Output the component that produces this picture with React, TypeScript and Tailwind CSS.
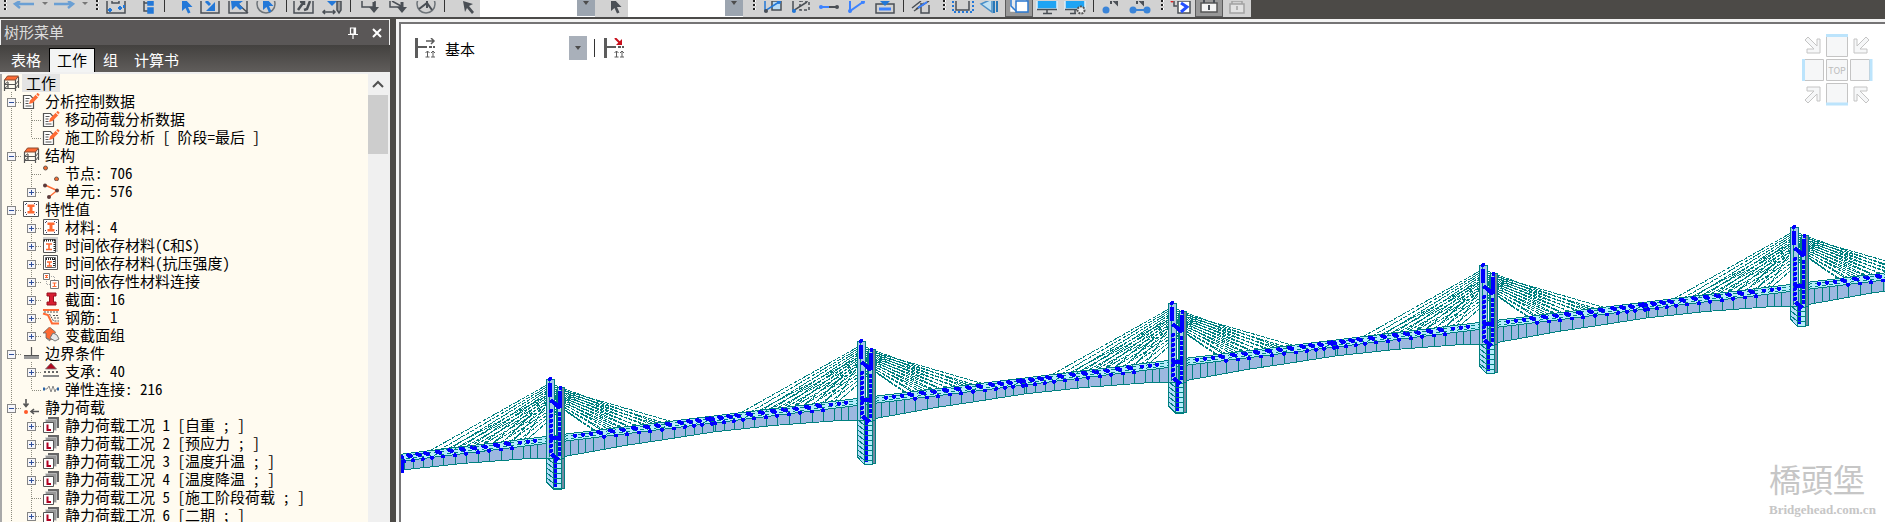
import { useState } from 'react'
import type { ReactNode } from 'react'
import { clsx } from 'clsx'

type IconName =
  | 'frame' | 'note' | 'nodes' | 'elements' | 'property' | 'creep' | 'strength' | 'link'
  | 'section' | 'rebar' | 'tapered' | 'boundary' | 'support' | 'spring' | 'load' | 'case'

interface TreeRow {
  level: 1 | 2
  icon: IconName
  label: string
  box?: 'plus' | 'minus'
  last?: boolean
}

const rows: TreeRow[] = [
  { level: 1, icon: 'note', label: '分析控制数据', box: 'minus' },
  { level: 2, icon: 'note', label: '移动荷载分析数据' },
  { level: 2, icon: 'note', label: '施工阶段分析 [ 阶段=最后 ]', last: true },
  { level: 1, icon: 'frame', label: '结构', box: 'minus' },
  { level: 2, icon: 'nodes', label: '节点: 706' },
  { level: 2, icon: 'elements', label: '单元: 576', box: 'plus', last: true },
  { level: 1, icon: 'property', label: '特性值', box: 'minus' },
  { level: 2, icon: 'property', label: '材料: 4', box: 'plus' },
  { level: 2, icon: 'creep', label: '时间依存材料(C和S)', box: 'plus' },
  { level: 2, icon: 'strength', label: '时间依存材料(抗压强度)', box: 'plus' },
  { level: 2, icon: 'link', label: '时间依存性材料连接', box: 'plus' },
  { level: 2, icon: 'section', label: '截面: 16', box: 'plus' },
  { level: 2, icon: 'rebar', label: '钢筋: 1', box: 'plus' },
  { level: 2, icon: 'tapered', label: '变截面组', box: 'plus', last: true },
  { level: 1, icon: 'boundary', label: '边界条件', box: 'minus' },
  { level: 2, icon: 'support', label: '支承: 40', box: 'plus' },
  { level: 2, icon: 'spring', label: '弹性连接: 216', last: true },
  { level: 1, icon: 'load', label: '静力荷载', box: 'minus' },
  { level: 2, icon: 'case', label: '静力荷载工况 1 [自重 ; ]', box: 'plus' },
  { level: 2, icon: 'case', label: '静力荷载工况 2 [预应力 ; ]', box: 'plus' },
  { level: 2, icon: 'case', label: '静力荷载工况 3 [温度升温 ; ]', box: 'plus' },
  { level: 2, icon: 'case', label: '静力荷载工况 4 [温度降温 ; ]', box: 'plus' },
  { level: 2, icon: 'case', label: '静力荷载工况 5 [施工阶段荷载 ; ]' },
  { level: 2, icon: 'case', label: '静力荷载工况 6 [二期 ; ]', box: 'plus' },
]

const tabs = ['表格', '工作', '组', '计算书']

const beamI = 'M5 4h7v2.500h-2v4h2V13H5v-2.500h2v-4H5z'

const treeIcons: Record<IconName, ReactNode> = {
  frame: (
    <>
      <path d="M4.500 1h11l-3 4h-11z" fill="#ff6a33" stroke="#8a4a30" />
      <path d="M1.500 5v11M12.500 5v11M15.500 2v11M5 7v6" fill="none" stroke="#555" strokeWidth="1.200" />
      <path d="M1.500 9.500h11l3-4M1.500 13.500h11l3-4M1.500 9.500L5 6.500M1.500 13.500l3.500-3" fill="none" stroke="#555" />
    </>
  ),
  note: (
    <>
      <path d="M.5 2.500h7l3 3.500v9.500H.5z" fill="#fff" stroke="#555" strokeWidth="1.200" />
      <path d="M2.500 5.500h4M2.500 8h3M2.500 10.500h3M2.500 13h6" stroke="#555" />
      <path d="M6 11l1-3.500L13 1.500l2.500 2.500-6 6z" fill="#ff6a33" />
      <path d="M14 .5l2 2" stroke="#ff6a33" strokeWidth="2" />
      <path d="M12.500 1.500l3 3" stroke="#fff" strokeWidth=".7" />
    </>
  ),
  nodes: (
    <>
      <circle cx="2.500" cy="3" r="2" fill="#f26a2e" stroke="#6b5a50" />
      <circle cx="13.500" cy="14" r="2" fill="#f26a2e" stroke="#6b5a50" />
    </>
  ),
  elements: (
    <>
      <path d="M2 2l12 5.500L6 14" fill="none" stroke="#ff6a33" strokeWidth="1.4" />
      <circle cx="2" cy="2.500" r="2" fill="#5b3a3a" />
      <circle cx="14" cy="7.500" r="2" fill="#5b3a3a" />
      <circle cx="6" cy="14" r="2" fill="#5b3a3a" />
    </>
  ),
  property: (
    <>
      <path d="M.5 .5h15v15H.5z" fill="#fff" stroke="#555" />
      <path d="M2.500 3v2M2.500 11v2M13.500 3v2M13.500 11v2M3 2.500h2M11 2.500h2M3 13.500h2M11 13.500h2" stroke="#446" strokeDasharray="1 1" />
      <path d={beamI} transform="translate(-.5 -.5)" fill="#ff6a33" />
    </>
  ),
  creep: (
    <>
      <path d="M0 0h15v15H0z" fill="#cfcfcf" />
      <path d="M.5 2.500h12v13H.5z" fill="#fff" stroke="#555" />
      <path d="M1 3.500h12M11.500 3v12" stroke="#222" strokeWidth="2" strokeDasharray="1 1" />
      <path d="M3 7h6M3 12.500h6M6 7v5" stroke="#ff6a33" strokeWidth="1.6" />
    </>
  ),
  strength: (
    <>
      <path d="M.5 .5h14v14H.5z" fill="#fff" stroke="#555" />
      <path d="M2.500 2.500h10v10h-10z" fill="#fff" stroke="#666" />
      <path d="M3 4h9M11 4v8" stroke="#222" strokeWidth="2" strokeDasharray="1 1" />
      <path d="M4 7h5M4 11h5M6.500 7v4" stroke="#ff6a33" strokeWidth="1.4" />
    </>
  ),
  link: (
    <>
      <path d="M.5 .5h6v6h-6zM7.500 7.500h8v8h-8z" fill="#fff" stroke="#777" />
      <path d="M2 2.500h3M2 4.500h3M3.500 2v3M9.500 10h4M9.500 13.500h4M11.500 10v4" stroke="#ff6a33" strokeWidth="1.2" />
      <path d="M3.500 8v3.500H7M8 3.500h3.500V7" fill="none" stroke="#aaa" strokeDasharray="1 1" />
    </>
  ),
  section: <path d="M4 2h9v3h-2.500v6H13v3H4v-3h2.500V5H4z" fill="#d81e30" stroke="#98101e" />,
  rebar: (
    <>
      <path d="M0 1h16M0 4.500l5 1.500 4 8.500h7" fill="none" stroke="#ff6a33" strokeWidth="2" />
      <path d="M1 3h15M6.500 5l4 7H16M10 6.500h6M11 9h5" fill="none" stroke="#555" strokeDasharray="2 1" />
    </>
  ),
  tapered: (
    <>
      <path d="M6.500 0l6 5-1.500 3-3 5-5-2V6H0z" fill="#ff6a33" stroke="#666" strokeWidth=".8" />
      <path d="M10 6l4 2 2 4-4 2-5-3z" fill="#e8e8e8" stroke="#777" />
      <path d="M3 11l4 3" stroke="#777" />
    </>
  ),
  boundary: (
    <>
      <path d="M1 11h15v3H1z" fill="#999" />
      <path d="M1 10.500h15M8.500 2v8" stroke="#555" strokeWidth="1.2" />
    </>
  ),
  support: (
    <>
      <path d="M8 0l5.500 6h-11z" fill="#b0081e" stroke="#777" strokeWidth=".8" />
      <path d="M1 9h14" stroke="#666" strokeWidth="2" strokeDasharray="2 2" />
      <path d="M0 13h16" stroke="#888" strokeWidth="2" />
    </>
  ),
  spring: (
    <>
      <path d="M2 8h2l2-3 2 6 2-6 2 6 1-3h3" fill="none" stroke="#888" />
      <path d="M0 6.500h2v3H0zM14 6.500h2v3h-2z" fill="#2a64a8" />
    </>
  ),
  load: (
    <>
      <path d="M3 0v7M.5 4.500L3 7.500l2.500-3M16 12.500H9M11 10l-3 2.500 3 2.500" fill="none" stroke="#555" strokeWidth="1.6" />
      <circle cx="3" cy="13" r="2" fill="#ff5a2a" />
    </>
  ),
  case: (
    <>
      <path d="M5 0h11v11H5z" fill="#666" />
      <path d="M2.500 2.500h11v11h-11z" fill="#999" stroke="#ddd" strokeWidth=".6" />
      <path d="M.5 5.500h10v10H.5z" fill="#fff" stroke="#555" />
      <path d="M4.500 7.500V13H8" fill="none" stroke="#b00020" strokeWidth="2" />
    </>
  ),
}

function TreeIcon({ name }: { name: IconName }) {
  return (
    <svg className="w-[18px] h-4 shrink-0" viewBox="-1 0 18 16">
      {treeIcons[name]}
    </svg>
  )
}

interface GuideProps {
  line: 'full' | 'half'
  branch?: boolean
  box?: 'plus' | 'minus'
}

function Guide({ line, branch, box }: GuideProps) {
  const drawing = (
    <svg className="block w-5 h-[18px]" viewBox="0 0 20 18" shapeRendering="crispEdges">
      <path
        d={`M9.500 0V${line === 'full' ? 18 : 10}${branch ? 'M9.500 10.500H20' : ''}`}
        stroke="#8c8c80"
        strokeDasharray="1 1"
      />
      {box && (
        <>
          <rect x="5.500" y="6.500" width="8" height="8" fill="#f6f6fa" stroke="#858585" />
          <path d={box === 'plus' ? 'M7 10.500h5M9.500 8v5' : 'M7 10.500h5'} stroke="#30509c" />
        </>
      )}
    </svg>
  )
  if (!box) return drawing
  return (
    <button className="shrink-0" aria-label={box === 'plus' ? '展开' : '折叠'}>
      {drawing}
    </button>
  )
}

function TreeItem({ row }: { row: TreeRow }) {
  return (
    <li className="flex items-center h-[18px] whitespace-pre">
      {row.level === 1 ? (
        <Guide line="full" branch box={row.box} />
      ) : (
        <>
          <Guide line="full" />
          <Guide line={row.last ? 'half' : 'full'} branch box={row.box} />
        </>
      )}
      <TreeIcon name={row.icon} />
      <span className="ml-[5px]">{row.label}</span>
    </li>
  )
}

function SidePanel() {
  const [active, setActive] = useState('工作')

  return (
    <aside className="w-[390px] shrink-0 flex flex-col min-h-0">
      {/* Title bar */}
      <div className="h-[26px] shrink-0 flex items-center border border-b-0 border-[#f0f0f0] bg-[#5a5757] pl-[3px] pr-1.5 text-[#dcdcdc]">
        <h2 className="flex-1 text-[15px]">树形菜单</h2>
        <button className="mr-3" aria-label="固定">
          <svg className="w-3 h-3" viewBox="0 0 12 12" fill="none" stroke="#fff">
            <path d="M3.500 1h5v6h-5zM1 7.500h10M6 8v4" strokeWidth="1.2" />
            <path d="M7.500 1v6" strokeWidth="2" />
          </svg>
        </button>
        <button aria-label="关闭">
          <svg className="w-3 h-3" viewBox="0 0 12 12" stroke="#fff" strokeWidth="2">
            <path d="M2 2l8 8M10 2l-8 8" />
          </svg>
        </button>
      </div>

      {/* Tabs */}
      <div className="h-[27px] shrink-0 flex items-end bg-linear-to-b from-[#43413f] to-[#605d5b] pl-[3px] text-[15px]">
        {tabs.map(tab => (
          <button
            key={tab}
            onClick={() => setActive(tab)}
            className={clsx(
              'h-6 px-[7px] border border-b-0',
              tab === active
                ? 'bg-[#f3f4f4] border-black text-black'
                : 'border-transparent text-white'
            )}
          >
            {tab}
          </button>
        ))}
      </div>

      {/* Tree */}
      <div className="flex-1 min-h-0 flex border-t-2 border-r-2 border-[#f0f0f0] bg-[#fffbf0]">
        <div className="flex-1 min-w-0 border-l-2 border-[#a8a8a8] text-[15px] leading-[18px] font-light text-black font-['Noto_Sans_Mono_CJK_SC','Noto_Sans_CJK_SC',monospace]">
          <div className="flex items-center h-[18px]">
            <TreeIcon name="frame" />
            <span className="ml-0.5 px-1 bg-[#e4e4e4]">工作</span>
          </div>
          <ul>
            {rows.map(row => (
              <TreeItem key={row.label} row={row} />
            ))}
          </ul>
        </div>
        <div className="w-5 shrink-0 bg-[#f0f0f0] flex flex-col">
          <svg className="w-5 h-[21px]" viewBox="0 0 20 21" fill="none" stroke="#505050" strokeWidth="2">
            <path d="M5 13l5-5 5 5" />
          </svg>
          <div className="h-[59px] bg-[#cdcdcd]" />
        </div>
      </div>
    </aside>
  )
}

const dark = '#4a4f55'
const blue = '#2378d8'

function Tool({ label, pressed, children }: { label: string; pressed?: boolean; children: ReactNode }) {
  return (
    <button
      aria-label={label}
      className={clsx('w-7 h-[17px] shrink-0', pressed && 'bg-[#989898] border border-t-0 border-[#5c5c5c]')}
    >
      <svg className={clsx('block h-4', pressed ? '-ml-px w-7' : 'w-7')} viewBox="0 0 28 16" fill="none" stroke={dark} strokeWidth="1.500">
        {children}
      </svg>
    </button>
  )
}

function Caret() {
  return (
    <svg className="w-3 h-4 shrink-0" viewBox="0 0 12 16">
      <path d="M4 2h6L7 5z" fill="#777" />
    </svg>
  )
}

function Grip({ className }: { className?: string }) {
  return (
    <svg className={clsx('w-2.5 h-[17px] shrink-0', className)} viewBox="0 0 10 17" shapeRendering="crispEdges">
      <path d="M6 0v11" stroke="#fff" strokeWidth="2" strokeDasharray="2 2" />
      <path d="M5 0v11" stroke="#222" strokeWidth="2" strokeDasharray="2 2" />
    </svg>
  )
}

function Separator({ className }: { className?: string }) {
  return (
    <div className={clsx('flex justify-center shrink-0 h-[17px]', className)}>
      <div className="w-px h-3 bg-[#333]" />
    </div>
  )
}

function ToolSelect({ label, className }: { label: string; className?: string }) {
  return (
    <div className={clsx('relative w-[115px] h-[17px] shrink-0', className)}>
      <select aria-label={label} className="w-full h-full appearance-none bg-white" />
      <svg className="absolute right-0 top-0 w-[18px] h-4 bg-[#9ca5b0] pointer-events-none" viewBox="0 0 18 16">
        <path d="M6 1h6L9 5z" fill="#4c4c4c" />
      </svg>
    </div>
  )
}

const pointer = 'M0 -5v15l3.500-3 2.500 5.500 2.500-1-2.500-5.500h4.500z'

function Toolbar() {
  return (
    <div className="flex w-[1251px] h-[18px] overflow-hidden bg-[#d2d2d2] border-b border-[#4b4b4b]">
      <Grip />
      <Tool label="撤销"><path d="M5 3h19M10 0L5 3l5 4" stroke="#6a9fd4" strokeWidth="2.500" /></Tool>
      <Caret />
      <Tool label="重做"><path d="M4 3h19M18 0l5 3-5 4" stroke="#6a9fd4" strokeWidth="2.500" /></Tool>
      <Caret />
      <Grip className="ml-0.5" />
      <Tool label="节点框选">
        <path d="M5 0v12h18V0M10 0v2h7V0" />
        <path d="M8 7v4M6 9h4M18 5v4M16 7h4M22 4v3" stroke={blue} strokeWidth="2" />
      </Tool>
      <Tool label="单元树">
        <path d="M14 0v10h4M14 2h4" />
        <path d="M18 0h5v4h-5zM18 7h5v5h-5z" fill={blue} stroke={blue} />
      </Tool>
      <Separator className="w-3" />
      <Tool label="选择"><path d={pointer} transform="translate(12 0)" fill={blue} stroke="none" /></Tool>
      <Tool label="窗口选择">
        <path d="M3 0v12h18V0" />
        <path d="M8 0l4 4" stroke={blue} strokeWidth="3" />
        <path d="M17 1v9H8z" fill={blue} stroke="none" />
      </Tool>
      <Tool label="窗口解除">
        <path d="M3 0v12h18V0M12 3l10 9" />
        <path d="M5 0h12l-4 3 4 4-3 2-4-4-4 4z" fill={blue} stroke="none" />
      </Tool>
      <Tool label="圆形选择">
        <circle cx="12" cy="3" r="9" stroke="#6d7378" />
        <path d={pointer} transform="translate(9 -1)" fill={blue} stroke="none" />
      </Tool>
      <Separator className="w-2" />
      <Tool label="多边形选择">
        <path d="M4 0v12h19V0" />
        <path d="M8 9l5-7M10 1l4-1v4M20 0l-3 8-3 1" strokeWidth="2.500" />
      </Tool>
      <Tool label="平面选择">
        <path d="M9 0l5 5 5-5z" fill={blue} stroke="none" />
        <path d="M5 11h12M7 9l-2 2 2 2M15 9l2 2-2 2" />
        <path d="M19 0h4v9l-2 3-2-3z" fill="#999" />
      </Tool>
      <Separator className="w-2" />
      <Tool label="激活">
        <path d="M8 0v6h13V0" />
        <path d="M20 1v6" strokeWidth="3" />
        <path d="M15 6h10l-5 6z" fill={dark} stroke="none" />
      </Tool>
      <Tool label="钝化">
        <path d="M8 0v6h13M10 0l9 5" />
        <path d="M20 1v6" strokeWidth="3" />
        <path d="M15 6h10l-5 6z" fill={dark} stroke="none" />
      </Tool>
      <Tool label="全部激活">
        <circle cx="16" cy="3" r="9" stroke="#6d7378" />
        <path d="M9 8l8-6 5 7M17 0v7" strokeWidth="2" />
      </Tool>
      <Separator className="w-3" />
      <Tool label="按名称选择">
        <path d="M13 0l10 3-4 2 5 6-2 2-5-6-2 4z" fill={dark} stroke="none" />
      </Tool>
      <ToolSelect label="选择节点" className="ml-0.5" />
      <Tool label="选择单元">
        <path d={pointer} transform="translate(16 0)" fill={dark} stroke="none" />
      </Tool>
      <ToolSelect label="选择命名" className="ml-[5px]" />
      <Grip className="ml-1.5" />
      <Tool label="缩放窗口">
        <path d="M13 0h9v9h-9z" fill="#b9dcf6" />
        <path d="M6 0v10l14-9" stroke={blue} />
        <circle cx="7" cy="10" r="2" fill={dark} stroke="none" />
        <circle cx="20" cy="1" r="2" fill={blue} stroke="none" />
      </Tool>
      <Tool label="全部缩放">
        <path d="M13 0h9v9h-9z" strokeDasharray="3 2" />
        <path d="M6 0v10l14-9" />
        <circle cx="7" cy="10" r="2" fill={blue} stroke="none" />
      </Tool>
      <Tool label="测量">
        <path d="M6 6h16" strokeWidth="2" />
        <path d="M6 6h8" stroke="#3c82ff" strokeWidth="2" />
        <circle cx="6" cy="6" r="2" fill="#3c82ff" stroke="none" />
        <circle cx="22" cy="6" r="2" fill={dark} stroke="none" />
      </Tool>
      <Tool label="折线">
        <path d="M7 0v10L20 1" stroke="#3c82ff" strokeWidth="2" />
        <circle cx="7" cy="10" r="2" fill="#3c82ff" stroke="none" />
        <circle cx="20" cy="1" r="2" fill="#3c82ff" stroke="none" />
      </Tool>
      <Tool label="载入">
        <path d="M5 3v9h18V3z" />
        <path d="M8 8h12" stroke="#3c82ff" strokeWidth="3" />
        <path d="M9 0h10l-5 5z" fill={blue} stroke="none" />
      </Tool>
      <Separator className="w-2" />
      <Tool label="编辑">
        <path d="M5 7l9-7M7 10L22 0M14 2v10h8V4M9 8l8-6" />
        <path d="M11 7l9-6" stroke="#3c82ff" strokeWidth="2" />
      </Tool>
      <Grip className="ml-1" />
      <Tool label="虚线框">
        <path d="M7 0v9h13V0" />
        <path d="M4 0v11h20V0" stroke={blue} strokeWidth="2" strokeDasharray="2 2" />
      </Tool>
      <Tool label="透视">
        <path d="M4 3L15 -2v13z" fill="#bfe0f2" stroke="#4a90c8" />
        <path d="M17 0v12M20 0v11" stroke="#2878b8" strokeWidth="2" />
      </Tool>
      <Tool label="消隐" pressed>
        <path d="M6 -3h14v14H6z" fill="#e8eaec" stroke="#fff" />
        <path d="M11 1h12v11H11z" fill="#fff" stroke="#2a78d0" />
        <path d="M6 0v6l5 5" stroke="#2a78d0" />
      </Tool>
      <Tool label="显示">
        <path d="M4 -4h20v12H4z" fill="#1fa4f4" stroke="#ddeefa" />
        <path d="M4 8.500h20M14 9v3M10 12.500h9" />
      </Tool>
      <Tool label="显示选项">
        <path d="M4 -4h20v12H4z" fill="#1fa4f4" stroke="#ddeefa" />
        <path d="M4 8.500h12M14 9v3M9 12.500h6" />
        <circle cx="20" cy="9" r="3.500" stroke="#555" strokeWidth="2" strokeDasharray="2 1" fill="#eee" />
      </Tool>
      <Separator className="w-2" />
      <Tool label="节点号">
        <circle cx="9" cy="9" r="3.500" fill="#3a84d8" stroke="none" />
        <path d="M14 3v-6l6 6v-6" strokeWidth="2" />
      </Tool>
      <Tool label="单元号">
        <path d="M8 9h14" stroke="#3a84d8" strokeWidth="2" />
        <circle cx="8" cy="9" r="3.500" fill="#3a84d8" stroke="none" />
        <circle cx="22" cy="9" r="3.500" fill="#3a84d8" stroke="none" />
        <path d="M12 3v-6l6 6v-6" strokeWidth="2" />
      </Tool>
      <Grip className="ml-1" />
      <Tool label="阶段">
        <path d="M7 0v5h3" />
        <path d="M11 0h12v12H11z" fill="#fff" />
        <path d="M14 2l6 4-6 5" stroke="#2450ff" strokeWidth="3" />
        <circle cx="5" cy="0" r="1.500" fill="#d22" stroke="none" />
      </Tool>
      <Tool label="锁定" pressed>
        <path d="M6 3h16v9H6z" fill="#f4f4f4" stroke="#555" />
        <path d="M9 3V0M19 3V0M14 5v5" strokeWidth="2" />
      </Tool>
      <Tool label="解锁">
        <path d="M7 3h14v9H7z" fill="#e2e2e2" stroke="#a2a2a2" />
        <path d="M9 3V0h10v3M14 5v4" stroke="#a2a2a2" />
      </Tool>
    </div>
  )
}

// Bridge model. Each span is drawn in coordinates relative to the head of its tower.
const SPAN = 311
const RISE = 38
const towers = [
  { n: -1, foot: 110 },
  { n: 0, foot: 110 },
  { n: 1, foot: 123 },
  { n: 2, foot: 110 },
  { n: 3, foot: 108 },
  { n: 4, foot: 99 },
]

const topY = (x: number) => 57 - (x * RISE) / SPAN
const slabY = (x: number) => 64 - (x * RISE) / SPAN

const soffit: [number, number][] = [
  [0, 79], [14, 77.5], [45, 72], [78, 66], [112, 61], [163, 53], [223, 46.5], [283, 42], [311, 41],
]

const soffitY = (x: number) => {
  const i = Math.max(1, soffit.findIndex(p => p[0] >= x))
  const [x0, y0] = soffit[i - 1]
  const [x1, y1] = soffit[i]
  return y0 + ((x - x0) / (x1 - x0)) * (y1 - y0)
}

const ribs = [20, 28, 35, 43, 54, 66, 77, 89, 100, 112, 124, 135, 144, 152, 163, 165, 174, 184, 193, 204, 216, 227, 239, 250, 262, 273, 284, 291, 298]
const rearDots = [25, 33, 41, 49, 61, 72, 84, 96, 107, 118, 130, 139, 148, 158, 161, 170, 179, 187, 199, 211, 223, 234, 245, 257, 268, 281, 289, 296]
const frontDots = [54, 66, 77, 89, 100, 112, 124, 135, 144, 152, 162, 165, 174, 184, 193, 204, 216, 227, 239, 250, 262, 273]
const pairs = (x: number) => (x >= 49 && x <= 268)

const cables = Array.from({ length: 10 }, (_, i) => i)
const studs = Array.from({ length: 9 }, (_, i) => 32 + i * 5)

function Deck() {
  const edge = soffit.map(([x, y]) => `${x},${y}`).join(' ')
  return (
    <g>
      <polygon points={`0,${slabY(0)} ${SPAN},${slabY(SPAN)} ${edge.split(' ').reverse().join(' ')}`} fill="#9cb8e0" />
      <polygon points={`0,${topY(0)} ${SPAN},${topY(SPAN)} ${SPAN},${slabY(SPAN)} 0,${slabY(0)}`} fill="#b4ecfa" />
      <polyline points={edge} fill="none" stroke="#008080" />
      <path
        d={`M0 ${topY(0)}L${SPAN} ${topY(SPAN)}M0 ${slabY(0)}L${SPAN} ${slabY(SPAN)}` +
          ribs.map(x => `M${x} ${slabY(x)}V${soffitY(x)}`).join('')}
        stroke="#008080"
        fill="none"
      />
      <path
        d={`M0 ${topY(0) + 2}L${SPAN} ${topY(SPAN) + 2}M0 ${topY(0) + 5}L${SPAN} ${topY(SPAN) + 5}`}
        stroke="#008080"
        strokeDasharray="4 3"
      />
      {rearDots.map(x => (
        <path
          key={x}
          d={pairs(x) ? `M${x - 1} ${topY(x) + 2}l3 1` : `M${x} ${topY(x) + 3}h.1`}
          stroke="#0000ff"
          strokeWidth="4"
          strokeLinecap="round"
        />
      ))}
      {frontDots.map(x => (
        <circle key={x} cx={x} cy={slabY(x) + 0.5} r="2" fill="#0000ff" />
      ))}
    </g>
  )
}

function Cables() {
  const d = cables
    .map(i => {
      const rearL = -120 + i * 10.5
      const frontL = -104 + i * 9
      const rearR = 107 - i * 7
      const frontR = 123 - i * 8.5
      return (
        `M-3 ${6 + i * 2}L${rearL} ${topY(rearL)}` +
        `M8 ${11 + i * 2.5}L${frontL} ${topY(frontL) + 1}` +
        `M4 ${6 + i * 2}L${rearR} ${topY(rearR)}` +
        `M12 ${11 + i * 2}L${frontR} ${topY(frontR) + 1}`
      )
    })
    .join('')
  return <path d={d} stroke="#008080" strokeDasharray="4 1" fill="none" />
}

function Tower({ foot }: { foot: number }) {
  const rungs = []
  for (let y = 84; y < foot; y += 5) rungs.push(y)
  return (
    <g>
      {/* Leg below the deck */}
      <path d={`M-3.500 79V${foot - 7}L3 ${foot}V79z`} fill="#b4dcfa" stroke="#008080" />
      <path d={`M3 79h8V${foot}H3z`} fill="#b4ecfa" stroke="#008080" />
      <path d={`M11 79h3V${foot - 1}h-3z`} fill="#7488a0" stroke="#008080" />
      <path d={rungs.map(y => `M-3 ${y - 5}l6 5h8`).join('')} stroke="#008080" fill="none" />

      {/* Columns */}
      <path d="M-3.500 0h7.500v79h-7.500z" fill="#a4c8ec" stroke="#008080" />
      <path d="M-.5 2v76M6 12v68" stroke="#008080" />
      <path d="M7.500 8h4v72h-4z" fill="#a4d0f0" stroke="#008080" />
      <path d="M11 8.500h3v71h-3z" fill="#7488a0" stroke="#008080" />
      <path d="M0 4v14M10 12v17M.5 21l9.500 8M0 59h11M1.500 75l7 6" stroke="#0000ff" strokeWidth="4" />
      <circle cx="0" cy="0" r="2" fill="#0000ff" />
      <circle cx="10.500" cy="9" r="2" fill="#0000ff" />
      {studs.map(y => (
        <g key={y} fill="#0000ff">
          <circle cx="1" cy={y} r="2" />
          <circle cx="9.500" cy={y + 3} r="2" />
        </g>
      ))}
      <path d={`M5 80V${foot - 2}`} stroke="#0000ff" strokeWidth="3" strokeDasharray="4 1" />
    </g>
  )
}

function BridgeModel() {
  return (
    <svg
      className="absolute inset-0 w-full h-full"
      viewBox="401 24 1484 498"
      preserveAspectRatio="xMinYMin slice"
      shapeRendering="crispEdges"
    >
      {towers.map(t => (
        <g key={t.n} transform={`translate(${550 + t.n * SPAN} ${379 - t.n * RISE})`}>
          <Deck />
        </g>
      ))}
      {towers.map(t => (
        <g key={t.n} transform={`translate(${550 + t.n * SPAN} ${379 - t.n * RISE})`}>
          <Cables />
          <Tower foot={t.foot} />
        </g>
      ))}
      <path d="M402 461v12" stroke="#0000ff" strokeWidth="3" />
    </svg>
  )
}

const cornerArrow = 'M4 1l9 9V3h3v14H3v-4h7L1 4z'

function ViewCube() {
  return (
    <svg className="absolute top-2.5 right-3 w-[72px] h-[72px]" viewBox="0 0 72 72" fill="#f6f7f8" stroke="#c4c4c4">
      <path d="M25.500 2.500h21v20h-21zM25.500 25.500h21v21h-21zM25.500 49.500h21v20h-21zM3.500 25.500h19v21h-19zM49.500 25.500h19v21h-19z" />
      <path d="M25 1.500h22M25 70h22M2.500 25v22M70 25v22" stroke="#bce4fc" strokeWidth="3" />
      <g transform="translate(3 2)"><path d={cornerArrow} /></g>
      <g transform="translate(69 2) scale(-1 1)"><path d={cornerArrow} /></g>
      <g transform="translate(3 70) scale(1 -1)"><path d={cornerArrow} /></g>
      <g transform="translate(69 70) scale(-1 -1)"><path d={cornerArrow} /></g>
      <text x="36" y="40" textAnchor="middle" fontSize="9" fill="#bdbdbd" stroke="none">TOP</text>
    </svg>
  )
}

function StageIcon({ red }: { red?: boolean }) {
  return (
    <svg className="w-[21px] h-5" viewBox="0 0 21 20" fill="none" stroke="#5c5c5c">
      <path d="M1.500 0v20" strokeWidth="3" />
      <path d="M3 9h9" strokeWidth="2" />
      <path d="M14 9h6" strokeWidth="2" strokeDasharray="3 1" />
      <path d="M12.500 19v-6M10.500 15l2-2 2 2M10.500 19h4M18 19v-6M16 15l2-2 2 2M16 19h4" />
      {red ? (
        <>
          <path d="M11 0l5 5" stroke="#c8101c" strokeWidth="2" />
          <path d="M18 1v6h-6z" fill="#c8101c" stroke="none" />
        </>
      ) : (
        <path d="M11 3h8M16 0l3 3-3 3" strokeWidth="1.500" />
      )}
    </svg>
  )
}

function ModelView() {
  return (
    <main className="flex-1 min-w-0 border-l-[3px] border-t-[3px] border-[#f4f4f4] ml-1.5">
      <div className="relative h-full overflow-hidden bg-white border-l-2 border-t-2 border-[#757475]">
        <BridgeModel />
        <div className="relative flex items-center h-6 mt-3 pl-3.5">
          <StageIcon />
          <div className="relative ml-2 w-[143px] h-6">
            <select aria-label="施工阶段" className="w-full h-full appearance-none bg-transparent pl-px text-[15px] text-black">
              <option>基本</option>
            </select>
            <svg className="absolute right-0 top-0 w-[18px] h-6 bg-[#a9b0ba] pointer-events-none" viewBox="0 0 18 24">
              <path d="M6 10h6l-3 4z" fill="#4c4c4c" />
            </svg>
          </div>
          <div className="w-px h-[18px] bg-[#333] ml-[7px] mr-[9px]" />
          <button aria-label="定义施工阶段"><StageIcon red /></button>
        </div>
        <ViewCube />

        {/* Watermark */}
        <div className="absolute right-2 bottom-1 text-[#c6c6c6]">
          <div className="mr-3 text-right text-[32px] leading-10 pb-1 font-['Noto_Sans_CJK_TC',sans-serif]">橋頭堡</div>
          <div className="text-[13px] leading-4 font-bold font-['Liberation_Serif',serif]">Bridgehead.com.cn</div>
        </div>
      </div>
    </main>
  )
}

export default function App() {
  return (
    <div className="h-screen flex flex-col overflow-hidden bg-[#4c4a47] font-['Noto_Sans_CJK_SC',sans-serif]">
      <Toolbar />
      <div className="flex-1 min-h-0 flex pt-px">
        <SidePanel />
        <ModelView />
      </div>
    </div>
  )
}
